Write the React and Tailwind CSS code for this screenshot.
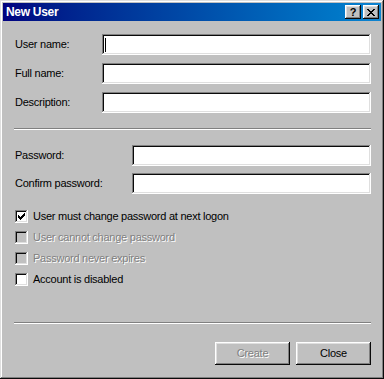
import React from "react";

const raised =
  "shadow-[inset_-1px_-1px_#0a0a0a,inset_1px_1px_#ffffff,inset_-2px_-2px_#808080,inset_2px_2px_#dfdfdf]";
const sunken =
  "shadow-[inset_-1px_-1px_#ffffff,inset_1px_1px_#808080,inset_-2px_-2px_#dfdfdf,inset_2px_2px_#0a0a0a]";

function Field({ label, labelW, caret }) {
  return (
    <div className="flex items-center h-[21px]">
      <div className={labelW}>{label}</div>
      <div className={`flex-1 h-[21px] bg-white flex items-center pl-[3px] ${sunken}`}>
        {caret && <div className="w-px h-[14px] bg-black" />}
      </div>
    </div>
  );
}

function Check({ label, checked, disabled }) {
  return (
    <div className="flex items-center h-[21px]">
      <div
        className={`w-[13px] h-[13px] flex items-center justify-center ${
          disabled ? "bg-[#c0c0c0]" : "bg-white"
        } ${sunken}`}
      >
        {checked && (
          <svg width="7" height="7" viewBox="0 0 7 7" shapeRendering="crispEdges">
            <path d="M0 2h1v3h-1zM1 3h1v3h-1zM2 4h1v3h-1zM3 3h1v3h-1zM4 2h1v3h-1zM5 1h1v3h-1zM6 0h1v3h-1z" fill="#000" />
          </svg>
        )}
      </div>
      <span
        className={`ml-[5px] ${
          disabled ? "text-[#808080] [text-shadow:1px_1px_0_#ffffff]" : "text-black"
        }`}
      >
        {label}
      </span>
    </div>
  );
}

function Sep() {
  return <div className="h-[2px] -ml-px border-t border-t-[#808080] border-b border-b-white" />;
}

export default function App() {
  return (
    <div
      className={`w-[384px] h-[379px] bg-[#c0c0c0] p-[3px] flex flex-col font-['Liberation_Sans',Arial,sans-serif] text-[11px] tracking-[-0.25px] text-black shadow-[inset_-1px_-1px_#0a0a0a,inset_1px_1px_#dfdfdf,inset_-2px_-2px_#808080,inset_2px_2px_#ffffff]`}
    >
      <div className="h-[18px] flex items-center bg-gradient-to-r from-[#000080] to-[#1084d0] pl-[3px] pr-[2px]">
        <span className="text-white font-bold text-[12px] tracking-[-0.3px]">New User</span>
        <div className="ml-auto flex gap-[2px]">
          <div className={`w-[16px] h-[14px] bg-[#c0c0c0] flex items-center justify-center ${raised}`}>
            <span className="font-bold text-[11px] leading-none tracking-normal">?</span>
          </div>
          <div className={`w-[16px] h-[14px] bg-[#c0c0c0] flex items-center justify-center ${raised}`}>
            <svg width="8" height="7" viewBox="0 0 8 7" shapeRendering="crispEdges">
              <path d="M0 0h2v1h-2zM6 0h2v1h-2zM1 1h2v1h-2zM5 1h2v1h-2zM2 2h4v1h-4zM3 3h2v1h-2zM2 4h4v1h-4zM1 5h2v1h-2zM5 5h2v1h-2zM0 6h2v1h-2zM6 6h2v1h-2z" fill="#000" />
            </svg>
          </div>
        </div>
      </div>
      <div className="flex-1 pt-[13px] pl-[12px] pr-[10px] flex flex-col">
        <Field label="User name:" labelW="w-[87px]" caret />
        <div className="mt-[8px]">
          <Field label="Full name:" labelW="w-[87px]" />
        </div>
        <div className="mt-[8px]">
          <Field label="Description:" labelW="w-[87px]" />
        </div>
        <div className="mt-[15px]">
          <Sep />
        </div>
        <div className="mt-[15px]">
          <Field label="Password:" labelW="w-[117px]" />
        </div>
        <div className="mt-[7px]">
          <Field label="Confirm password:" labelW="w-[117px]" />
        </div>
        <div className="mt-[12px] flex flex-col">
          <Check label="User must change password at next logon" checked />
          <Check label="User cannot change password" disabled />
          <Check label="Password never expires" disabled />
          <Check label="Account is disabled" />
        </div>
        <div className="mt-[32px]">
          <Sep />
        </div>
        <div className="mt-[18px] flex justify-end gap-[6px]">
          <div className={`w-[75px] h-[23px] flex items-center justify-center ${raised}`}>
            <span className="text-[#808080] [text-shadow:1px_1px_0_#ffffff]">Create</span>
          </div>
          <div className={`w-[75px] h-[23px] flex items-center justify-center ${raised}`}>
            <span>Close</span>
          </div>
        </div>
      </div>
    </div>
  );
}
